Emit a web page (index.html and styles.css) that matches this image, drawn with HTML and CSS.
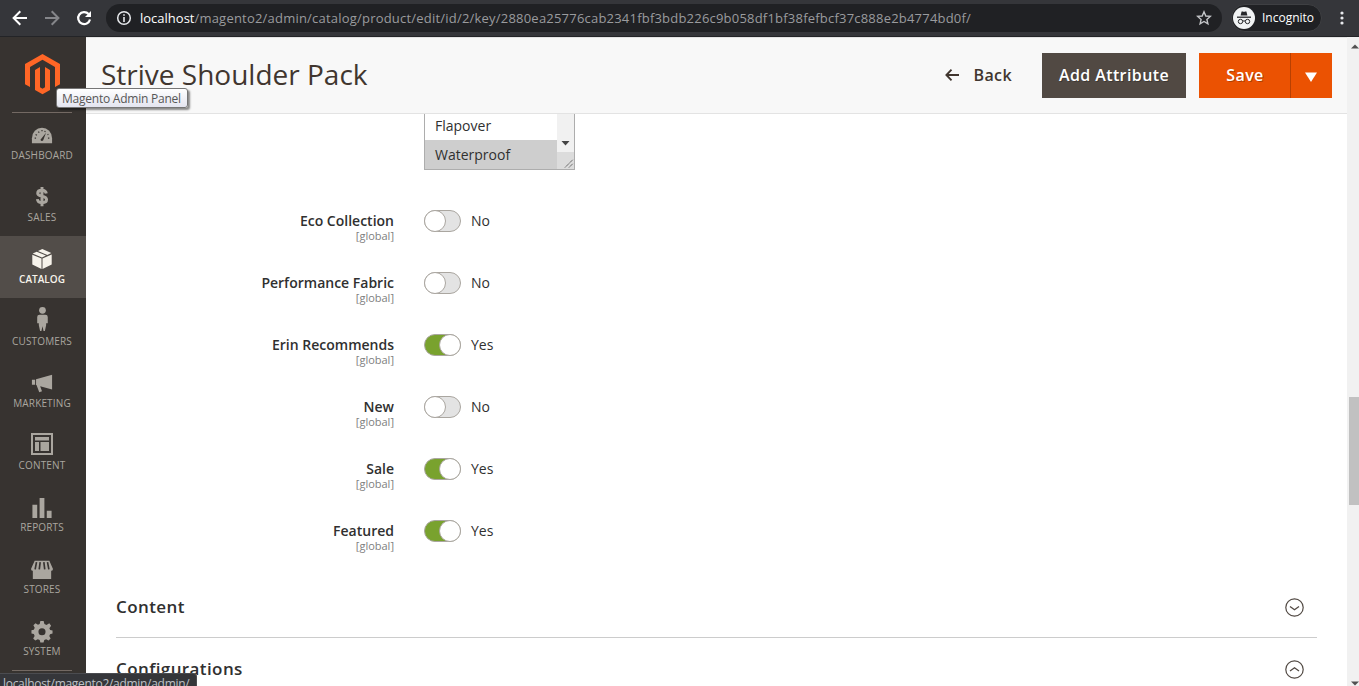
FILE: index.html
```html
<!DOCTYPE html>
<html lang="en">
<head>
<meta charset="utf-8">
<title>Strive Shoulder Pack</title>
<link rel="stylesheet" href="styles.css">
</head>
<body>
<div class="window">
  <div class="browser-bar">
    <svg class="nav-icon" width="100" height="36" viewBox="0 0 100 36" fill="none">
      <path d="M27 18H14M20.300 11.300L13.600 18L20.300 24.700" stroke="#fff" stroke-width="2"/>
      <path d="M45 18H58M51.700 11.300L58.400 18L51.700 24.700" stroke="#85868a" stroke-width="2"/>
      <path d="M88.600 14A6 6 0 1 0 90 19.500" stroke="#fff" stroke-width="2.200"/>
      <path d="M91 11V17H85Z" fill="#fff"/>
    </svg>
    <div class="address">
      <svg class="info-icon" width="16" height="16" viewBox="0 0 16 16" fill="none" stroke="#e8eaed">
        <circle cx="8" cy="8" r="6.300" stroke-width="1.500"/><path d="M8 7V12M8 4.200V5.800" stroke-width="1.600"/>
      </svg>
      <div class="url"><span class="host">localhost</span><span class="path">/magento2/admin/catalog/product/edit/id/2/key/2880ea25776cab2341fbf3bdb226c9b058df1bf38fefbcf37c888e2b4774bd0f/</span></div>
      <svg class="star" width="16" height="16" viewBox="0 0 16 16" fill="none"><path d="M8 1.800L9.800 6L14.300 6.400L10.900 9.400L11.900 13.800L8 11.500L4.100 13.800L5.100 9.400L1.700 6.400L6.200 6Z" stroke="#c4c6c9" stroke-width="1.400"/></svg>
    </div>
    <div class="incognito">
      <svg width="22" height="22" viewBox="0 0 22 22">
        <circle cx="11" cy="11" r="11" fill="#f1f3f4"/>
        <path d="M7.600 8.500L8.600 4.600H10L11 5L12 4.600H13.400L14.400 8.500Z" fill="#26272a"/>
        <path d="M4 10.200H18" stroke="#26272a" stroke-width="1.300"/>
        <g fill="none" stroke="#26272a"><circle cx="7.500" cy="14.500" r="2.200"/><circle cx="14.500" cy="14.500" r="2.200"/><path d="M9.700 14.200Q11 13.500 12.300 14.200"/></g>
      </svg>
      <span class="incognito-label">Incognito</span>
    </div>
    <svg class="dots" width="4" height="14" viewBox="0 0 4 14" fill="#e8eaed"><circle cx="2" cy="2" r="1.600"/><circle cx="2" cy="7" r="1.600"/><circle cx="2" cy="12" r="1.600"/></svg>
  </div>

  <div class="page">
    <nav class="sidebar">
      <div class="logo">
        <svg width="35" height="41" viewBox="0 0 35 41" fill="#ff6626"><path d="M17.500 0L0 10.100V30.200L5 33.100V13L17.500 5.800L30 13V33.100L35 30.200V10.100Z"/><path d="M10 15.900L15 13V33.200L17.500 34.700L20 33.200V13L25 15.900V36L17.500 40.300L10 36Z"/></svg>
      </div>
      <div class="menu">
        <a class="item"><svg class="ico" viewBox="0 0 24 24"><path d="M1 21V15.500A11 11.500 0 0 1 23 15.500V21Z"/><path d="M10.300 17.300L16.400 9.500L13.300 17.700A1.600 1.600 0 0 1 10.300 17.300" fill="#373330"/><path d="M4 15.500H5.500M5 11.500L6.500 12.300M8 8.200L9 9.500M12 6.500V8M15.500 7.500L15 8.700M18 11.700L19 11.200M18.500 15.500H20" stroke="#373330" stroke-width="1.300"/></svg><span>DASHBOARD</span></a>
        <a class="item"><svg class="ico" viewBox="0 0 24 24"><path d="M16.700 8.200C16.300 5.700 14.600 4.600 12 4.600C9.100 4.600 7.300 5.900 7.300 7.900C7.300 12.300 17 9.900 17 14.800C17 17 15 18.200 12 18.200C9 18.200 7.200 16.800 7 14.300M12 1V22" fill="none" stroke="#aaa69f" stroke-width="3.200"/></svg><span>SALES</span></a>
        <a class="item active"><svg class="ico" viewBox="0 0 24 24"><path d="M8 3.100L12.300 1L21.300 5L17.300 7ZM6.700 3.700L16 7.600L12 9.500L2.700 5.600ZM2.300 6.700L11.500 10.600V21L2.300 16.600ZM12.500 10.600L21.700 6.500V16.600L12.500 21Z"/></svg><span>CATALOG</span></a>
        <a class="item"><svg class="ico up" viewBox="0 0 22 25"><circle cx="11.500" cy="3.500" r="3.500"/><path d="M8.500 8H14.500Q17 8 17 10.500V17H15.300V19L14 25H12.600L11.500 20L10.400 25H9L7.700 19V17H6V10.500Q6 8 8.500 8Z"/></svg><span>CUSTOMERS</span></a>
        <a class="item"><svg class="ico" viewBox="0 0 24 24"><path d="M1 8.500H4.500V14H1ZM5.500 8L23 3V19L10 15.500L12 21L9 22L6 14.300H5.500Z"/></svg><span>MARKETING</span></a>
        <a class="item"><svg class="ico up2" viewBox="0 0 24 24"><path fill-rule="evenodd" d="M1 1H23V23H1ZM3 3V21H21V3ZM5 5H19V8.500H5ZM5 10H9V19H5ZM10.500 10H19V19H10.500Z"/></svg><span>CONTENT</span></a>
        <a class="item"><svg class="ico up1" viewBox="0 0 24 24"><path d="M2 9H7V23H2ZM9.500 2H14.500V23H9.500ZM17 15.500H22V23H17Z"/></svg><span>REPORTS</span></a>
        <a class="item"><svg class="ico" viewBox="0 0 24 24"><path d="M4 3H20L24 12Q23.500 14.300 22 14V23H2V14Q.5 14.300 0 12Z"/><path d="M6 4.500L4.500 12.500M10 4.500L9 12.500M14 4.500L15 12.500M18 4.500L19.500 12.500" stroke="#373330" stroke-width="1.800"/></svg><span>STORES</span></a>
        <a class="item"><svg class="ico up1" viewBox="0 0 24 24"><path fill-rule="evenodd" d="M10.300 1H13.700L14.500 4.300L16.700 5.200L19.600 3.500L21.500 5.900L19.700 8.600L20.500 10.400L23 11V14L20.400 14.800L19.600 16.700L21 19.400L18.900 21.500L16.300 20L14.400 20.800L13.600 23.500H10.300L9.600 20.800L7.600 20L5 21.500L2.800 19.300L4.300 16.700L3.500 14.700L1 14V10.800L3.500 10.100L4.400 8.200L3 5.500L5.200 3.300L7.800 5L9.600 4.200ZM12 8.600A3.700 3.700 0 1 0 12 16A3.700 3.700 0 1 0 12 8.600Z"/></svg><span>SYSTEM</span></a>
      </div>
      <div class="rule"></div>
    </nav>

    <main class="main">
      <header class="header">
        <h1 class="title">Strive Shoulder Pack</h1>
        <div class="actions">
          <a class="back"><svg width="14" height="12" viewBox="0 0 14 12" fill="none" stroke="#41362f" stroke-width="1.900"><path d="M14 6H1.500M6.500 .7L1.400 6L6.500 11.300"/></svg><span class="back-label">Back</span></a>
          <button class="btn add">Add Attribute</button>
          <div class="split"><button class="btn save">Save</button><button class="btn more"><svg width="12" height="10" viewBox="0 0 12 10"><path d="M0 .5H12L6 10Z" fill="#fff"/></svg></button></div>
        </div>
      </header>
      <div class="content">
        <div class="multiselect">
          <div class="options"><div class="option">Flapover</div><div class="option selected">Waterproof</div></div>
          <div class="list-scroll">
            <svg width="17" height="38" viewBox="0 0 17 38"><path d="M4.500 27H12.500L8.500 31.500Z" fill="#444"/></svg>
            <svg class="resize" width="17" height="17" viewBox="0 0 17 17"><path d="M8 15.500L16 7.500M12 15.500L16 11.500" stroke="#555" stroke-dasharray="1.400 .5"/></svg>
          </div>
        </div>
        <div class="fields">
          <div class="field"><div class="label"><span class="name">Eco Collection</span><span class="scope">[global]</span></div><div class="toggle"></div><span class="value">No</span></div>
          <div class="field"><div class="label"><span class="name">Performance Fabric</span><span class="scope">[global]</span></div><div class="toggle"></div><span class="value">No</span></div>
          <div class="field"><div class="label"><span class="name">Erin Recommends</span><span class="scope">[global]</span></div><div class="toggle on"></div><span class="value">Yes</span></div>
          <div class="field"><div class="label"><span class="name">New</span><span class="scope">[global]</span></div><div class="toggle"></div><span class="value">No</span></div>
          <div class="field"><div class="label"><span class="name">Sale</span><span class="scope">[global]</span></div><div class="toggle on"></div><span class="value">Yes</span></div>
          <div class="field"><div class="label"><span class="name">Featured</span><span class="scope">[global]</span></div><div class="toggle on"></div><span class="value">Yes</span></div>
        </div>
        <section class="section"><h2 class="section-title">Content</h2><svg width="19" height="19" viewBox="0 0 19 19" fill="none" stroke="#514943"><circle cx="9.500" cy="9.500" r="8.700" stroke-width="1.200"/><path d="M5 8.500L9.500 11.800L14 8.500" stroke-width="1.300"/></svg></section>
        <section class="section"><h2 class="section-title">Configurations</h2><svg width="19" height="19" viewBox="0 0 19 19" fill="none" stroke="#514943"><circle cx="9.500" cy="9.500" r="8.700" stroke-width="1.200"/><path d="M5 11L9.500 7.700L14 11" stroke-width="1.300"/></svg></section>
      </div>
    </main>

    <div class="scrollbar">
      <svg class="arrow" width="10" height="5" viewBox="0 0 10 5" fill="#505050"><path d="M2 4.500L6 .5L10 4.500Z"/></svg>
      <div class="thumb"></div>
      <svg class="arrow" width="10" height="5" viewBox="0 0 10 5" fill="#505050"><path d="M2 .5L6 4.500L10 .5Z"/></svg>
    </div>
  </div>
  <div class="tooltip">Magento Admin Panel</div>
  <div class="status">localhost/magento2/admin/admin/</div>
</div>
</body>
</html>
```
FILE: styles.css
```css
* { box-sizing: border-box; }
body { margin: 0; font-family: "Open Sans", sans-serif; color: #303030; }
.window { position: relative; width: 1359px; height: 686px; overflow: hidden; background: #fff; display: flex; flex-direction: column; }

.browser-bar { flex: none; height: 37px; background: #35363a; border-bottom: 1px solid #232427; display: flex; align-items: center; }
.nav-icon { flex: none; width: 100px; }
.address { width: 1116px; height: 28px; margin-left: 6px; padding: 0 10px; border-radius: 14px; background: #202124; display: flex; align-items: center; }
.info-icon { flex: none; }
.url { flex: 1; margin-left: 8px; font-size: 13px; line-height: 20px; white-space: nowrap; color: #9a9b9e; }
.host { color: #fff; }
.path { letter-spacing: .21px; }
.star { flex: none; }
.incognito { width: 91px; height: 28px; margin-left: 9px; padding-left: 1px; border: 1px solid #3f4043; border-radius: 14px; background: #202124; display: flex; align-items: center; }
.incognito-label { margin-left: 7px; margin-top: -1px; font-size: 12px; color: #fff; white-space: nowrap; }
.dots { margin-left: 18px; }

.page { flex: 1; min-height: 0; display: flex; }
.sidebar { flex: none; width: 86px; background: #373330; overflow: hidden; }
.logo { height: 76px; margin: 0 14px 0 12px; padding: 17px 0 0 13px; border-bottom: 1px solid #736963; }
.logo svg { display: block; }
.item { display: flex; flex-direction: column; align-items: center; height: 62px; padding: 12px 2px 0 0; font-size: 10px; line-height: 14px; letter-spacing: .15px; color: #aaa69f; }
.menu { margin-top: -1px; }
.item .ico { display: block; width: 24px; height: 22px; margin-bottom: 2px; fill: #aaa69f; }
.item .up { height: 24px; margin-top: -3px; margin-bottom: 3px; }
.item .up1 { height: 23px; margin-bottom: 1px; }
.item .up2 { height: 24px; margin-top: -2px; margin-bottom: 2px; }
.item.active { background: #524d49; color: #f7f3eb; font-weight: 600; letter-spacing: 0; }
.item.active .ico { height: 24px; margin-bottom: 0; fill: #f7f3eb; }
.rule { margin: 0 14px 0 12px; height: 1px; background: #736963; }

.main { flex: 1; min-width: 0; display: flex; flex-direction: column; }
.header { flex: none; height: 77px; padding: 0 15px; background: #f8f8f8; border-top: 1px solid #e3e3e3; border-bottom: 1px solid #e3e3e3; display: flex; justify-content: space-between; }
.title { margin: 17px 0 0; font-size: 28px; line-height: 38px; font-weight: 400; color: #41362f; white-space: nowrap; }
.actions { display: flex; align-items: flex-start; padding-top: 15px; }
.back { display: flex; align-items: center; height: 43px; margin-right: 30px; font-size: 16px; font-weight: 600; letter-spacing: .4px; color: #41362f; }
.back-label { margin-left: 14px; }
.btn { height: 45px; padding: 0 0 2px; border: 0; font: 600 16px "Open Sans", sans-serif; letter-spacing: .4px; color: #fff; text-shadow: 1px 1px 0 rgba(0,0,0,.25); white-space: nowrap; }
.add { width: 144px; background: #514943; margin-right: 13px; }
.split { display: flex; background: #eb5202; }
.save { width: 91px; padding-left: 1px; background: #eb5202; }
.more { width: 42px; background: #eb5202; border-left: 1px solid #b84002; display: flex; align-items: center; justify-content: center; padding: 3px 1px 0 0; }

.content { flex: 1; min-height: 0; overflow: hidden; padding-left: 30px; padding-right: 30px; }
.multiselect { width: 151px; height: 56px; margin-left: 308px; border: 1px solid #adadad; border-top: 0; display: flex; }
.options { flex: 1; margin-top: -3px; font-size: 14px; line-height: 29px; }
.option { height: 29px; padding-left: 10px; }
.selected { background: #cecece; }
.list-scroll { width: 17px; background: #f1f1f1; display: flex; flex-direction: column; }
.list-scroll svg { display: block; }
.resize { background: #dcdcdc; }
.fields { padding: 20px 0 14px; }
.field { height: 62px; display: flex; align-items: flex-start; }
.label { width: 278px; display: flex; flex-direction: column; align-items: flex-end; padding-top: 21px; }
.name { font-size: 14px; line-height: 19px; font-weight: 600; white-space: nowrap; }
.scope { font-size: 11px; line-height: 12px; color: #808080; }
.toggle { width: 37px; height: 22px; margin: 20px 10px 0 30px; border: 1px solid #aaa6a0; border-radius: 11px; background: #e3e3e3; display: flex; }
.toggle::before { content: ""; flex: none; box-sizing: border-box; width: 22px; height: 22px; margin: -1px; border: 1px solid #aaa6a0; border-radius: 50%; background: #fff; }
.toggle.on { background: #79a22e; justify-content: flex-end; }
.value { margin-top: 21px; font-size: 14px; line-height: 20px; }
.section { height: 62px; padding-right: 13px; border-bottom: 1px solid #ccc; display: flex; align-items: center; justify-content: space-between; }
.section svg { margin-top: 2px; }
.section-title { margin: 0; font-size: 17px; line-height: 24px; font-weight: 600; letter-spacing: .4px; }

.scrollbar { flex: none; width: 12px; background: #f1f1f1; display: flex; flex-direction: column; align-items: flex-end; padding: 7px 0 0; }
.thumb { width: 10px; height: 108px; margin-top: 348px; margin-bottom: auto; background: #c1c1c1; }
.tooltip { position: absolute; left: 56px; top: 88px; width: 132px; height: 20px; padding-left: 5px; border: 1px solid #767676; border-radius: 3px; background: linear-gradient(#fff, #e4e5f0); box-shadow: 2px 2px 2px rgba(0,0,0,.45); font-size: 12px; line-height: 19px; letter-spacing: -.23px; color: #575757; white-space: nowrap; }
.status { position: absolute; left: 0; top: 673px; width: 197px; height: 18px; padding-left: 3px; border-top: 1px solid #4b4c50; border-right: 1px solid #4b4c50; border-top-right-radius: 4px; background: #35363a; color: #bdc1c6; font-size: 12px; line-height: 20px; letter-spacing: -.3px; white-space: nowrap; }
```
